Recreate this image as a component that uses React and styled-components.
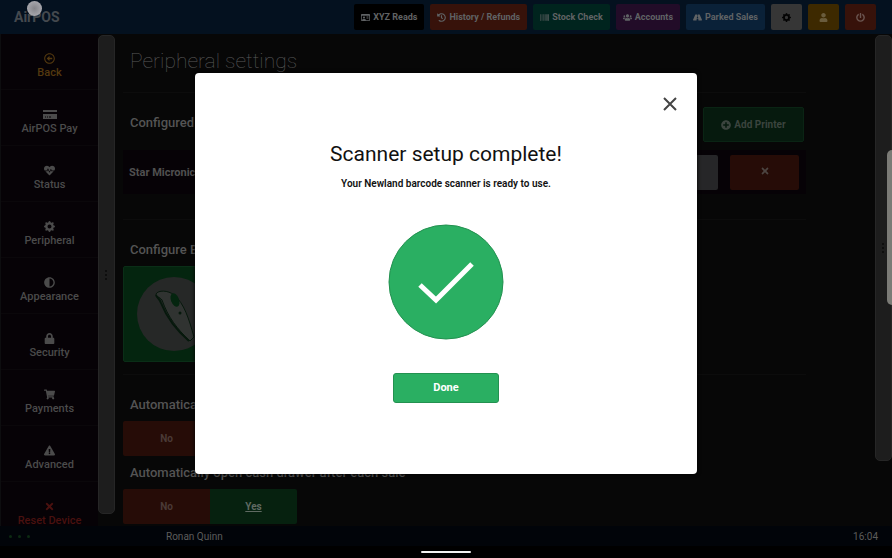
import React from 'react';
import styled, { createGlobalStyle } from 'styled-components';
import {
  FaRegArrowAltCircleLeft,
  FaPlusCircle,
  FaExclamationTriangle,
  FaHeartbeat,
  FaHistory,
  FaRegIdCard,
  FaLock,
  FaRoad,
  FaBarcode,
  FaShoppingCart,
  FaTimes,
  FaUser,
  FaUsers,
  FaAdjust,
  FaPowerOff
} from 'react-icons/fa';
import { BsGearFill } from 'react-icons/bs';

const CardIcon = () => (
  <svg width='14' height='11' viewBox='0 0 14 11' fill='currentColor'>
    <path d='M0 1h14v2H0zM0 5h14v5H0z' />
    <path d='M2 8h1M4 8h1M6 8h2' stroke='#060206' />
  </svg>
);

const topActions = [
  { label: 'XYZ Reads', icon: FaRegIdCard, color: '#000000' },
  { label: 'History / Refunds', icon: FaHistory, color: '#37120a' },
  { label: 'Stock Check', icon: FaBarcode, color: '#00241e' },
  { label: 'Accounts', icon: FaUsers, color: '#220c28' },
  { label: 'Parked Sales', icon: FaRoad, color: '#0a2138' }
];

const iconActions = [
  { title: 'Settings', icon: BsGearFill, color: '#363636', ink: '#030303' },
  { title: 'User', icon: FaUser, color: '#3d2900', ink: '#6a5c3c' },
  { title: 'Log out', icon: FaPowerOff, color: '#37120a', ink: '#6b5550' }
];

const menuItems = [
  { label: 'Back', icon: FaRegArrowAltCircleLeft, color: '#54390f' },
  { label: 'AirPOS Pay', icon: CardIcon },
  { label: 'Status', icon: FaHeartbeat },
  { label: 'Peripheral', icon: BsGearFill },
  { label: 'Appearance', icon: FaAdjust },
  { label: 'Security', icon: FaLock },
  { label: 'Payments', icon: FaShoppingCart },
  { label: 'Advanced', icon: FaExclamationTriangle },
  { label: 'Reset Device', icon: FaTimes, color: '#4a110f' }
];

function TopBar() {
  return (
    <StyledTopBar>
      <Brand>AirPOS</Brand>
      <TouchPoint />
      <Actions>
        {topActions.map(({ label, icon: Icon, color }) => (
          <TopButton key={label} $color={color}>
            <Icon /> {label}
          </TopButton>
        ))}
        {iconActions.map(({ title, icon: Icon, color, ink }) => (
          <IconButton key={title} aria-label={title} $color={color} $ink={ink}>
            <Icon />
          </IconButton>
        ))}
      </Actions>
    </StyledTopBar>
  );
}

function SideMenu() {
  return (
    <StyledMenu>
      {menuItems.map(({ label, icon: Icon, color }) => (
        <MenuLink key={label} href='#' $color={color}>
          <Icon />
          <span>{label}</span>
        </MenuLink>
      ))}
    </StyledMenu>
  );
}

function YesNo() {
  return (
    <Toggle>
      <ToggleButton $color='#260c07' $ink='#4a3a36'>No</ToggleButton>
      <ToggleButton $color='#06210f' $ink='#5f6a62' $active>Yes</ToggleButton>
    </Toggle>
  );
}

function Scanner() {
  return (
    <svg width='74' height='74' viewBox='0 0 74 74' aria-hidden='true'>
      <circle cx='37' cy='37' r='37' fill='#262827' />
      <path d='M19 17c2-4 12-4 18 1 10 8 15 24 20 42l-4 4C40 52 31 40 25 23c-2-3-6-3-6-6z' fill='#303331' stroke='#06180c' />
      <path d='M19 18c1 3 4 4 5 8 6 15 15 27 28 38' fill='none' stroke='#06180c' strokeWidth='2' />
      <ellipse cx='38' cy='23' rx='4' ry='7' transform='rotate(-22 38 23)' fill='#04250f' />
      <circle cx='43' cy='36' r='1.5' fill='#06180c' />
    </svg>
  );
}

function Settings() {
  return (
    <StyledSettings>
      <Title>Peripheral settings</Title>
      <Section>
        <SectionHead>
          <Heading>Configured Printers</Heading>
          <AddButton><FaPlusCircle /> Add Printer</AddButton>
        </SectionHead>
        <PrinterRow>
          <span>Star Micronics</span>
          <PrinterButton aria-label='Edit printer' $color='#262628'><BsGearFill /></PrinterButton>
          <PrinterButton aria-label='Remove printer' $color='#260c07'><FaTimes /></PrinterButton>
        </PrinterRow>
      </Section>
      <Section>
        <Heading>Configure Barcode Scanner</Heading>
        <ScannerButton aria-label='Barcode scanner'><Scanner /></ScannerButton>
      </Section>
      <Section>
        <Heading>Automatically print receipts</Heading>
        <YesNo />
        <Heading>Automatically open cash drawer after each sale</Heading>
        <YesNo />
      </Section>
    </StyledSettings>
  );
}

function SetupDialog() {
  return (
    <Overlay>
      <Dialog role='dialog' aria-labelledby='setup-title'>
        <CloseButton aria-label='Close'>
          <svg width='14' height='14' viewBox='0 0 14 14'>
            <path d='M1 1l12 12M13 1L1 13' stroke='#444' strokeWidth='2' />
          </svg>
        </CloseButton>
        <DialogTitle id='setup-title'>Scanner setup complete!</DialogTitle>
        <DialogText>Your Newland barcode scanner is ready to use.</DialogText>
        <svg width='116' height='116' viewBox='0 0 116 116' aria-hidden='true'>
          <circle cx='58' cy='58' r='57' fill='#2aaf62' stroke='#239150' />
          <path d='M32 61l16 15 36-36' fill='none' stroke='#fff' strokeWidth='5' />
        </svg>
        <DoneButton>Done</DoneButton>
      </Dialog>
    </Overlay>
  );
}

function App() {
  return (
    <Page>
      <GlobalStyle />
      <TopBar />
      <Body>
        <SideMenu />
        <ScrollRail $bottom={12}><Grip /></ScrollRail>
        <Settings />
        <ScrollRail $bottom={65}><Grip /></ScrollRail>
        <EdgeHandle />
      </Body>
      <StatusBar>
        <Dots><i /><i /><i /></Dots>
        <Operator>Ronan Quinn</Operator>
        <span>16:04</span>
      </StatusBar>
      <SystemBar><Pill /></SystemBar>
      <SetupDialog />
    </Page>
  );
}

const GlobalStyle = createGlobalStyle`
  * {
    box-sizing: border-box;
  }
  body {
    margin: 0;
    background: #000;
    font-family: Roboto, sans-serif;
  }
  button {
    padding: 0;
    border: 0;
    font-family: inherit;
    cursor: pointer;
  }
`;

const Page = styled.div`
  position: relative;
  display: flex;
  flex-direction: column;
  height: 100vh;
  overflow: hidden;
  background: #070707;
`;

const StyledTopBar = styled.header`
  position: relative;
  display: flex;
  align-items: center;
  justify-content: space-between;
  flex: none;
  height: 34px;
  padding: 0 16px 0 14px;
  background: #04111f;
`;

const Brand = styled.span`
  font-size: 14px;
  font-weight: 700;
  color: #44494e;
`;

const TouchPoint = styled.i`
  position: absolute;
  top: 1px;
  left: 27px;
  width: 15px;
  height: 15px;
  border-radius: 50%;
  background: radial-gradient(#85858a, #b4b4ba);
`;

const Actions = styled.div`
  display: flex;
  gap: 6px;
`;

const TopButton = styled.button`
  display: flex;
  align-items: center;
  gap: 3px;
  height: 26px;
  padding: 0 7px;
  border-radius: 2px;
  background: ${(props) => props.$color};
  color: #606365;
  font-size: 9px;
  font-weight: 700;
  white-space: nowrap;
`;

const IconButton = styled(TopButton)`
  justify-content: center;
  width: 31px;
  color: ${(props) => props.$ink};
`;

const Body = styled.div`
  position: relative;
  display: flex;
  flex: 1;
  min-height: 0;
`;

const StyledMenu = styled.nav`
  flex: none;
  width: 98px;
  overflow: hidden;
  border-left: 1px solid #0d0d0f;
  background: #060206;
`;

const MenuLink = styled.a`
  display: flex;
  flex-direction: column;
  align-items: center;
  gap: 3px;
  height: 56px;
  padding-top: 19px;
  border-bottom: 1px solid #0a070a;
  color: ${(props) => props.$color || '#4b4b4b'};
  font-size: 11px;
  font-weight: 500;
  line-height: 12px;
  text-decoration: none;
  svg {
    flex: none;
  }
`;

const ScrollRail = styled.div`
  display: flex;
  align-items: center;
  justify-content: center;
  flex: none;
  width: 17px;
  margin: 1px 0 ${(props) => props.$bottom}px;
  border: 1px solid #262626;
  border-radius: 5px;
  background: #1d1d1d;
`;

const Grip = styled.i`
  width: 3px;
  height: 10px;
  border-left: 2px dotted #0e0e0e;
`;

const EdgeHandle = styled.i`
  position: absolute;
  top: 116px;
  right: 0;
  width: 5px;
  height: 155px;
  border-radius: 5px 0 0 5px;
  background: #7b7b76;
`;

const StyledSettings = styled.main`
  flex: 1;
  min-width: 0;
  padding: 0 69px 0 8px;
  overflow: hidden;
`;

const Title = styled.h1`
  height: 58px;
  margin: 0;
  padding-left: 7px;
  font-size: 21px;
  font-weight: 100;
  line-height: 54px;
  color: #5a5a5a;
`;

const Section = styled.section`
  padding: 14px 0 12px;
  border-top: 1px solid #0c0c0c;
`;

const SectionHead = styled.div`
  display: flex;
  justify-content: space-between;
  padding: 0 2px 8px 0;
`;

const Heading = styled.h2`
  margin: 0;
  padding-left: 7px;
  font-size: 13px;
  font-weight: 500;
  line-height: 32px;
  color: #545454;
`;

const AddButton = styled.button`
  display: flex;
  align-items: center;
  justify-content: center;
  gap: 3px;
  width: 101px;
  height: 35px;
  border: 1px solid #0a2414;
  border-radius: 2px;
  background: #061a0e;
  color: #3b443e;
  font-size: 10px;
  font-weight: 700;
`;

const PrinterRow = styled.div`
  display: flex;
  align-items: center;
  gap: 12px;
  height: 44px;
  margin-bottom: 13px;
  padding: 0 7px 0 6px;
  background: #060206;
  color: #505050;
  font-size: 11px;
  font-weight: 700;
  span {
    flex: 1;
  }
`;

const PrinterButton = styled.button`
  width: 69px;
  height: 35px;
  border-radius: 2px;
  background: ${(props) => props.$color};
  color: #4c4441;
  font-size: 10px;
`;

const ScannerButton = styled.button`
  display: flex;
  align-items: center;
  justify-content: center;
  width: 102px;
  height: 96px;
  border: 1px solid #0a2e17;
  border-radius: 2px;
  background: #04250f;
`;

const Toggle = styled.div`
  display: flex;
  width: 174px;
  margin-bottom: 1px;
  border-radius: 2px;
  overflow: hidden;
`;

const ToggleButton = styled.button`
  flex: 1;
  height: 35px;
  background: ${(props) => props.$color};
  color: ${(props) => props.$ink};
  font-size: 10px;
  font-weight: 700;
  text-decoration: ${(props) => (props.$active ? 'underline' : 'none')};
`;

const StatusBar = styled.footer`
  display: flex;
  align-items: center;
  flex: none;
  height: 20px;
  padding: 0 14px 0 9px;
  background: #010409;
  color: #5c5c5c;
  font-size: 10px;
`;

const Dots = styled.div`
  display: flex;
  gap: 6px;
  width: 157px;
  i {
    width: 3px;
    height: 3px;
    border-radius: 50%;
    background: #0c2a12;
  }
`;

const Operator = styled.span`
  flex: 1;
`;

const SystemBar = styled.div`
  display: flex;
  align-items: center;
  justify-content: center;
  flex: none;
  height: 12px;
  background: #000;
`;

const Pill = styled.i`
  width: 50px;
  height: 2px;
  border-radius: 1px;
  background: #f2f2f2;
`;

const Overlay = styled.div`
  position: absolute;
  inset: 0 0 12px;
  display: flex;
  align-items: center;
  justify-content: center;
`;

const Dialog = styled.div`
  display: flex;
  flex-direction: column;
  align-items: center;
  width: 100%;
  max-width: 502px;
  padding: 19px 15px 71px;
  border-radius: 4px;
  background: #fff;
  box-shadow: 0 0 4px #000;
  color: #111;
`;

const CloseButton = styled.button`
  display: flex;
  align-items: center;
  justify-content: center;
  align-self: flex-end;
  width: 24px;
  height: 24px;
  background: none;
`;

const DialogTitle = styled.h2`
  margin: 23px 0 0;
  font-size: 21px;
  font-weight: 400;
  line-height: 30px;
`;

const DialogText = styled.p`
  margin: 7px 0 32px;
  font-size: 10px;
  font-weight: 600;
  line-height: 16px;
`;

const DoneButton = styled.button`
  width: 106px;
  height: 30px;
  margin-top: 33px;
  border: 1px solid #239150;
  border-radius: 3px;
  background: #2aaf62;
  color: #fff;
  font-size: 11px;
  font-weight: 700;
`;

export default App;
